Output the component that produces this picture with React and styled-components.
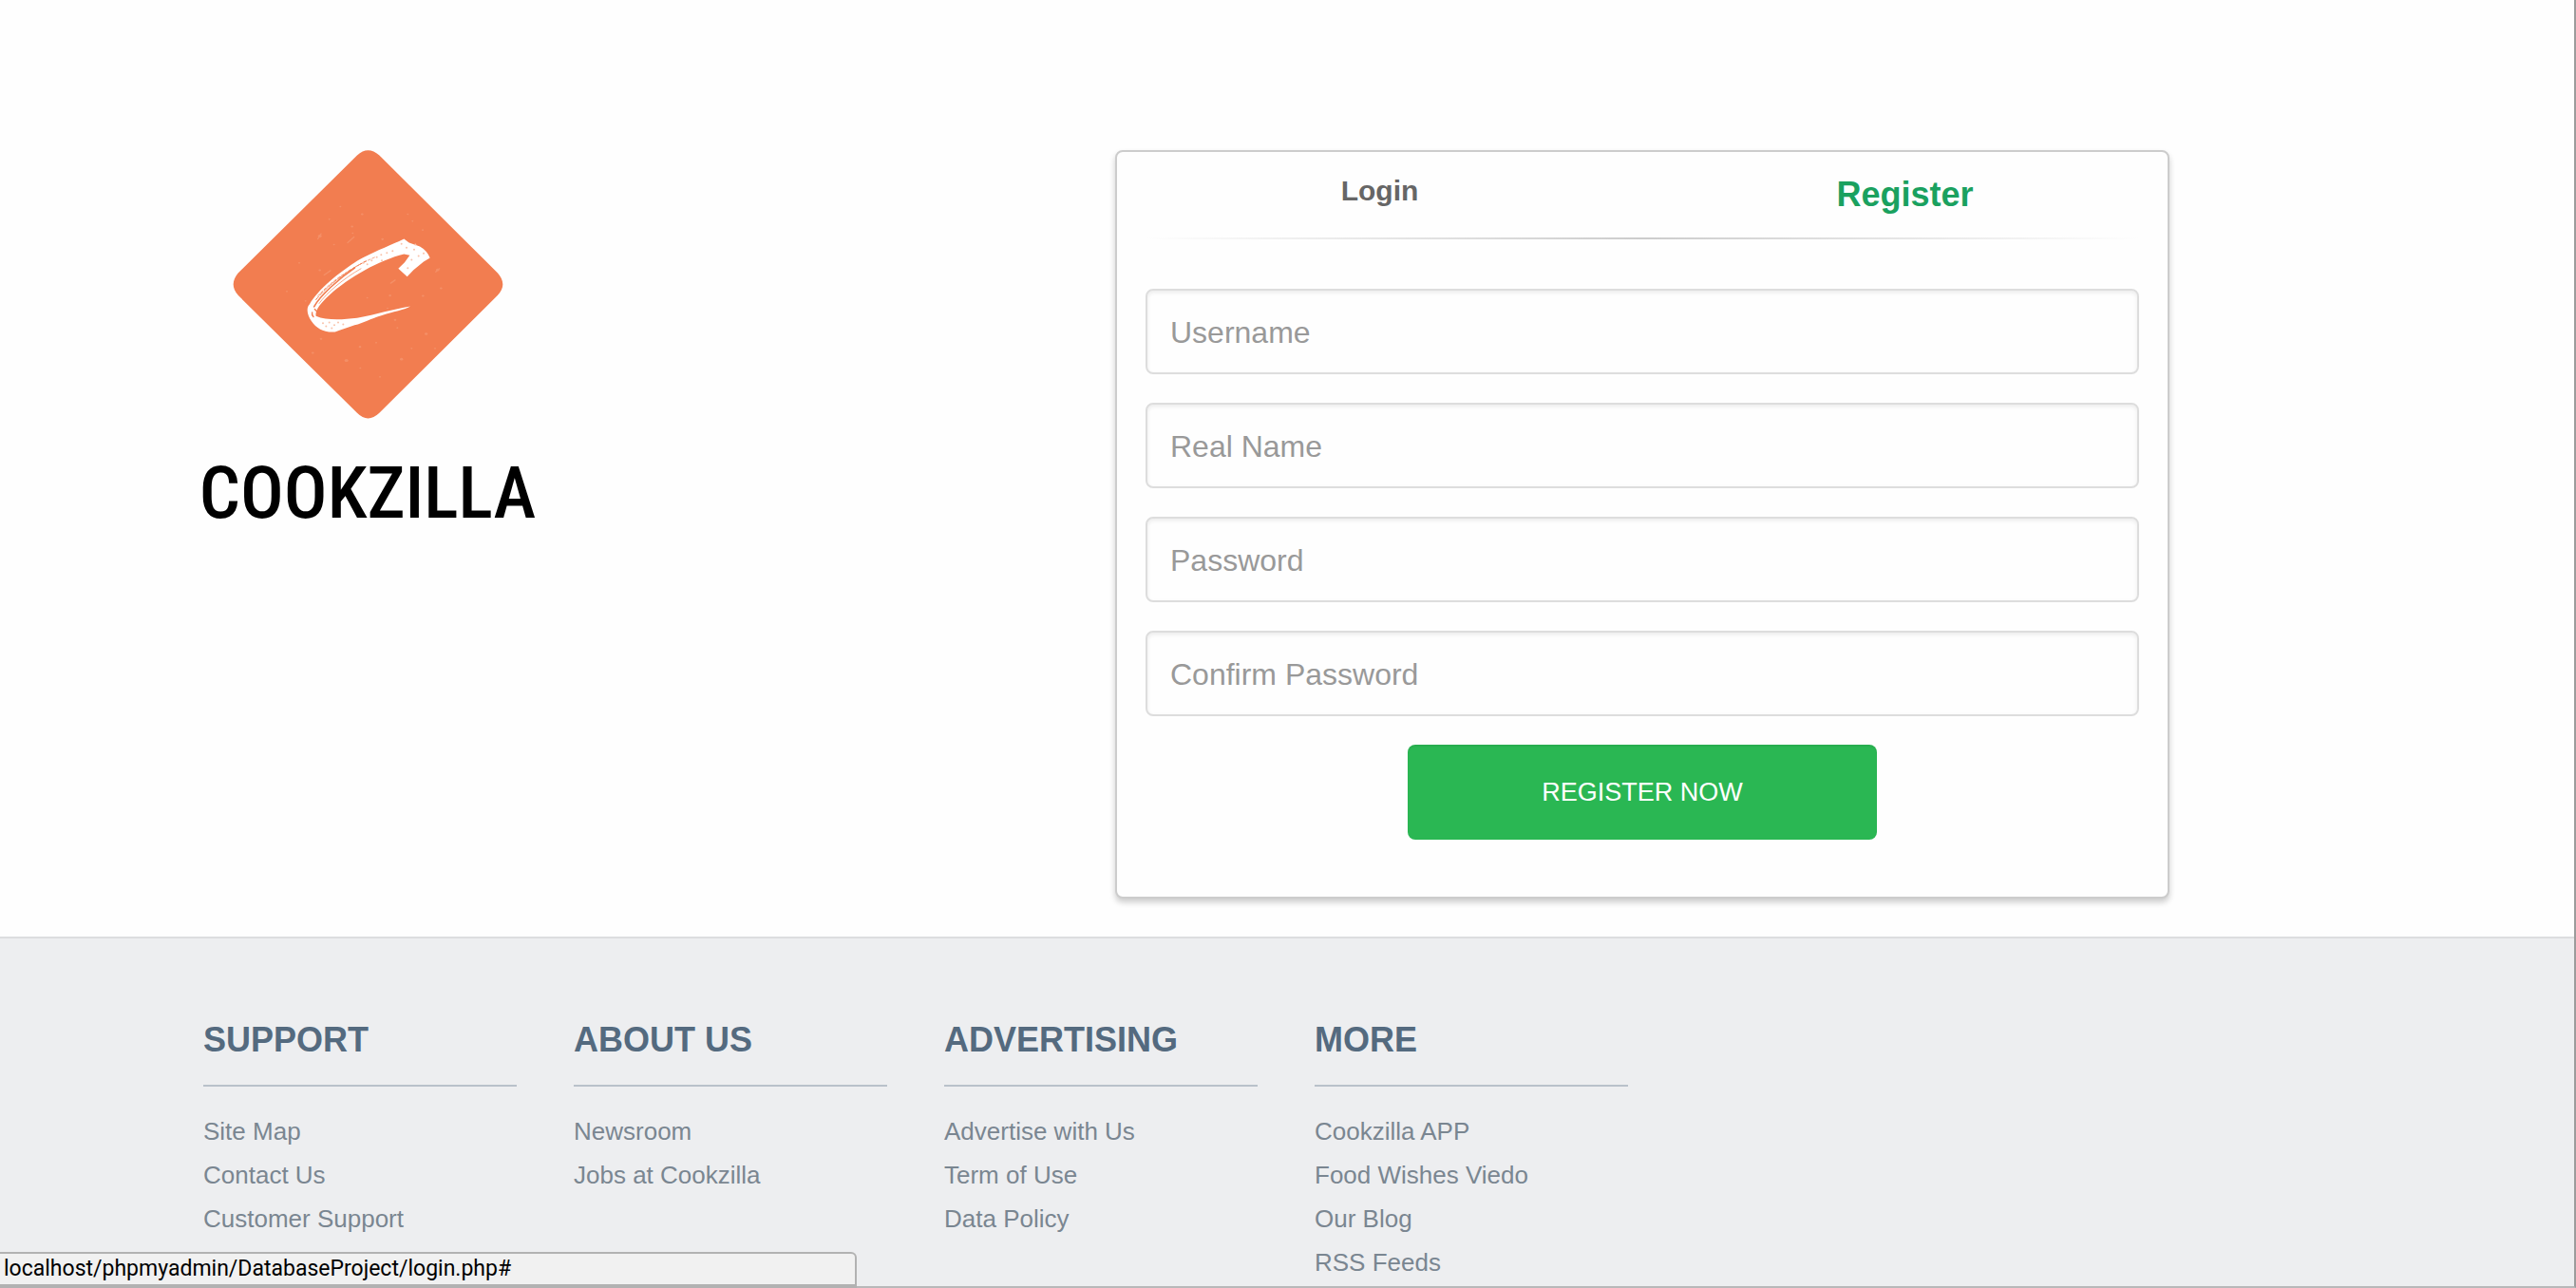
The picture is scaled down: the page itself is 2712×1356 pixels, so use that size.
import React from "react";
import styled, { createGlobalStyle } from "styled-components";

const GlobalStyle = createGlobalStyle`
  * { box-sizing: border-box; }
  body {
    margin: 0;
    background: #fefefe;
    color: #666;
    font-family: "Liberation Sans", Arial, sans-serif;
    font-size: 26px;
  }
`;

const Page = styled.div`
  display: flex;
  flex-direction: column;
  height: 100vh;
  overflow: hidden;
  border-right: 2px solid #9c9c9c;
  border-bottom: 2px solid #b8b8b9;
`;

const Container = styled.div`
  width: 100%;
  max-width: 2342px;
  margin: 0 auto;
  padding: 0 30px;
`;

const Main = styled.main`
  flex: none;
  padding: 158px 0 40px;
`;

const Columns = styled(Container)`
  display: grid;
  grid-template-columns: minmax(346px, 900px) minmax(0, 1110px);
  column-gap: 60px;
  align-items: start;
`;

const Brand = styled.a`
  display: flex;
  flex-direction: column;
  align-items: center;
  width: 346px;
  color: #000;
  text-decoration: none;
`;

const Wordmark = styled.span`
  margin-top: 22px;
  font-family: "Roboto Condensed", "Liberation Sans Narrow", "Liberation Sans", sans-serif;
  font-size: 76px;
  font-weight: 500;
  line-height: 112px;
`;

const Card = styled.section`
  border: 2px solid #ccc;
  border-radius: 8px;
  background: #fefefe;
  box-shadow: 0 4px 6px rgba(0, 0, 0, 0.2);
`;

const Tabs = styled.nav`
  display: grid;
  grid-template-columns: 1fr 1fr;
  align-items: start;
  padding: 20px 0;
  text-align: center;
`;

const Tab = styled.a`
  color: ${(p) => (p.$active ? "#1aa15f" : "#666")};
  font-size: ${(p) => (p.$active ? 36 : 30)}px;
  line-height: ${(p) => (p.$active ? 50 : 42)}px;
  font-weight: 700;
  text-decoration: none;
`;

const Divider = styled.hr`
  height: 2px;
  margin: 0 30px;
  border: 0;
  background: linear-gradient(to right, transparent, #ccc, transparent);
`;

const Form = styled.form`
  display: flex;
  flex-direction: column;
  gap: 30px;
  padding: 52px 30px 60px;
`;

const Input = styled.input`
  width: 100%;
  height: 90px;
  padding: 2px 24px 0;
  border: 2px solid #ddd;
  border-radius: 8px;
  background: #fefefe;
  box-shadow: inset 0 2px 4px rgba(0, 0, 0, 0.08);
  color: #555;
  font: 32px "Liberation Sans", Arial, sans-serif;

  &::placeholder {
    color: #999;
    opacity: 1;
  }
`;

const Submit = styled.button`
  align-self: center;
  width: 494px;
  max-width: 100%;
  height: 100px;
  border: 0;
  border-radius: 8px;
  background: #2ab753;
  box-shadow: inset 0 2px 2px rgba(0, 0, 0, 0.06);
  color: #fff;
  font: 27px "Liberation Sans", Arial, sans-serif;
  text-transform: uppercase;
`;

const Footer = styled.footer`
  flex: 1;
  min-height: 0;
  padding-top: 82px;
  border-top: 2px solid #dcdddf;
  background: #edeef0;
`;

const FooterColumns = styled(Container)`
  display: grid;
  grid-template-columns: repeat(4, 330px);
  column-gap: 60px;
`;

const FooterTitle = styled.h2`
  margin: 0 0 24px;
  padding-bottom: 22px;
  border-bottom: 2px solid #b9c1ca;
  color: #546a7f;
  font-size: 36px;
  line-height: 50px;
  text-transform: uppercase;
`;

const LinkList = styled.ul`
  margin: 0;
  padding: 0;
  list-style: none;
  line-height: 46px;
`;

const FooterLink = styled.a`
  color: #7a8691;
  text-decoration: none;
`;

const StatusBar = styled.div`
  position: fixed;
  left: 0;
  bottom: 0;
  width: 902px;
  height: 38px;
  padding-left: 4px;
  border: solid #b2b2b2;
  border-width: 2px 2px 4px 0;
  border-top-right-radius: 6px;
  background: #f1f1f1;
  color: #000;
  font: 23px/32px Roboto, sans-serif;
`;

const fields = [
  { label: "Username", type: "text" },
  { label: "Real Name", type: "text" },
  { label: "Password", type: "password" },
  { label: "Confirm Password", type: "password" },
];

const groups = [
  { title: "Support", links: ["Site Map", "Contact Us", "Customer Support"] },
  { title: "About us", links: ["Newsroom", "Jobs at Cookzilla"] },
  { title: "Advertising", links: ["Advertise with Us", "Term of Use", "Data Policy"] },
  { title: "More", links: ["Cookzilla APP", "Food Wishes Viedo", "Our Blog", "RSS Feeds"] },
];

const specks = [
  [475, 232, 3], [544, 256, 4], [688, 256, 3], [703, 278, 3], [512, 295, 4], [514, 316, 3],
  [410, 325, 6], [608, 335, 4], [735, 306, 3], [455, 352, 3], [345, 410, 3], [410, 433, 4],
  [782, 432, 5], [793, 490, 4], [736, 514, 4], [632, 513, 4], [560, 520, 3], [306, 500, 3],
  [365, 530, 3], [624, 553, 3], [648, 590, 4], [746, 634, 5], [655, 615, 3], [414, 650, 4],
  [537, 675, 4], [388, 694, 4], [494, 718, 6], [668, 714, 5], [600, 770, 3], [774, 680, 3],
  [538, 742, 3], [588, 662, 3], [700, 680, 3], [440, 272, 3],
];

const grain = [
  [668, 350], [684, 362], [708, 368], [722, 388], [700, 400], [688, 426], [712, 352], [738, 380],
  [640, 372], [622, 378], [604, 384], [590, 392], [606, 402], [574, 402], [560, 414], [548, 410],
  [440, 598], [456, 606], [430, 610], [468, 598], [448, 616], [484, 604], [420, 600],
];

function LogoMark() {
  return (
    <svg width="346" height="283" viewBox="42 54 1038 848" aria-hidden="true">
      <path
        fill="#f27d50"
        d="M528 70Q562 38 598 70L972 442Q1004 478 972 512L598 884Q562 918 528 884L152 512Q122 478 152 442Z"
      />
      <g fill="#f48f67">
        {specks.map(([x, y, r]) => (
          <ellipse key={`${x}-${y}`} cx={x} cy={y} rx={r} ry={r * 0.8} />
        ))}
      </g>
      <g stroke="#f48f67" strokeWidth="4" strokeLinecap="round">
        <path d="M498 346L518 328M424 448L444 434M404 334L414 318M634 474L648 464M776 438L788 428" />
      </g>
      <path
        fill="#fff"
        d="M676 334L692 346L726 358Q748 370 758 394L738 406L706 432L686 453L658 428L678 408L694 386L676 382
           C600 400 500 456 440 512C410 540 394 562 398 578C430 592 480 590 528 584
           C590 572 640 556 696 547C680 558 640 564 604 576C570 586 548 600 520 606
           C500 614 480 618 458 628C420 630 400 616 384 594C370 574 366 552 378 540
           C404 494 470 440 530 402C580 374 640 352 676 334Z"
      />
      <g fill="none" stroke="#f27d50" strokeLinecap="round">
        <path strokeWidth="5" d="M392 548C412 512 470 460 520 426" />
        <path strokeWidth="2" d="M408 538C430 506 486 458 540 428" />
        <path strokeWidth="3" strokeDasharray="14 5" d="M398 526C430 486 490 438 556 404" />
        <path strokeWidth="2" strokeDasharray="8 6" d="M404 514C440 474 500 428 584 392" />
        <path strokeWidth="4" d="M386 566C384 574 388 578 390 580M394 556L406 568" />
      </g>
      <g fill="#f9c3ab">
        {grain.map(([x, y]) => (
          <circle key={`${x}-${y}`} cx={x} cy={y} r="3" />
        ))}
      </g>
    </svg>
  );
}

export default function App() {
  return (
    <>
      <GlobalStyle />
      <Page>
        <Main>
          <Columns>
            <Brand href="#">
              <LogoMark />
              <Wordmark>COOKZILLA</Wordmark>
            </Brand>
            <Card>
              <Tabs>
                <Tab href="#">Login</Tab>
                <Tab href="#" $active>Register</Tab>
              </Tabs>
              <Divider />
              <Form onSubmit={(e) => e.preventDefault()}>
                {fields.map((f) => (
                  <Input key={f.label} type={f.type} placeholder={f.label} aria-label={f.label} />
                ))}
                <Submit type="submit">Register Now</Submit>
              </Form>
            </Card>
          </Columns>
        </Main>
        <Footer>
          <FooterColumns>
            {groups.map((g) => (
              <div key={g.title}>
                <FooterTitle>{g.title}</FooterTitle>
                <LinkList>
                  {g.links.map((l) => (
                    <li key={l}>
                      <FooterLink href="#">{l}</FooterLink>
                    </li>
                  ))}
                </LinkList>
              </div>
            ))}
          </FooterColumns>
        </Footer>
      </Page>
      <StatusBar>localhost/phpmyadmin/DatabaseProject/login.php#</StatusBar>
    </>
  );
}
